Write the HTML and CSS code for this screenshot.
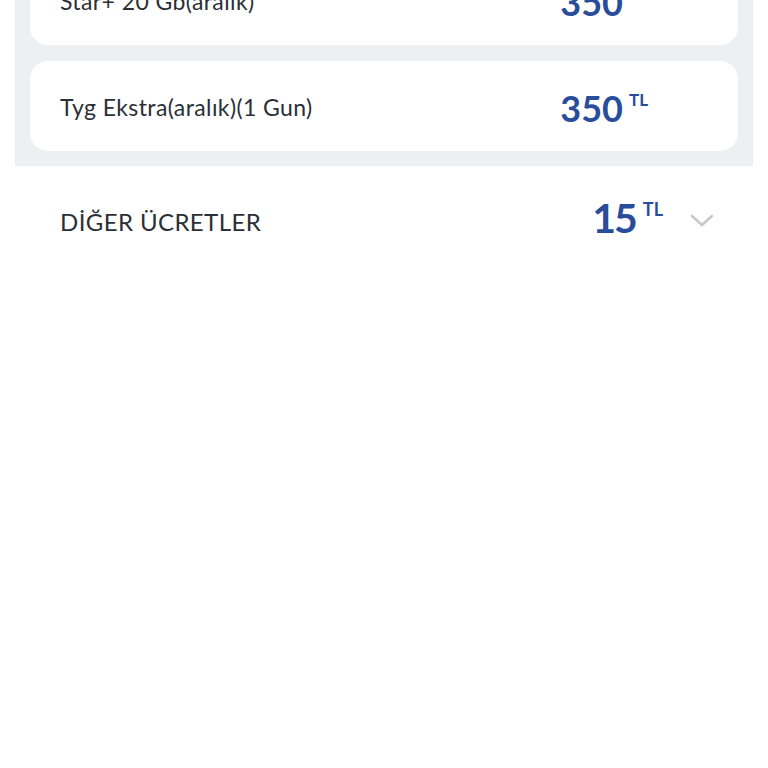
FILE: index.html
```html
<!DOCTYPE html>
<html lang="tr">
<head>
  <meta charset="UTF-8">
  <title>Fatura Detayı</title>
  <link rel="stylesheet" href="styles.css">
</head>
<body>

  <div class="extras-box">
    <div class="item-card">
      <span class="item-name">Star+ 20 Gb(aralık)</span>
      <span class="price">350<sup>TL</sup></span>
    </div>
    <div class="item-card">
      <span class="item-name">Tyg Ekstra(aralık)(1 Gun)</span>
      <span class="price">350<sup>TL</sup></span>
    </div>
  </div>

  <div class="fee-row">
    <span class="fee-title">DİĞER ÜCRETLER</span>
    <span class="price price-big">15<sup>TL</sup></span>
    <svg class="chevron" width="24" height="14" viewBox="0 0 24 14">
      <path d="M2 2 L12 11 L22 2" fill="none" stroke="#c9c9c9" stroke-width="2.6" stroke-linecap="round" stroke-linejoin="round"/>
    </svg>
  </div>

</body>
</html>
```

FILE: styles.css
```css
body {
  margin: 0;
  font-family: 'Lato', 'Noto Sans', sans-serif;
  background: #fff;
  color: #2b2f36;
}

.extras-box {
  margin: -60px 15px 0;
  padding: 15px;
  background: #edf0f3;
  display: flex;
  flex-direction: column;
  gap: 16px;
}

.item-card {
  background: #fff;
  border-radius: 18px;
  height: 90px;
  display: flex;
  align-items: center;
  padding: 0 90px 0 30px;
}

.item-name {
  flex: 1;
  font-size: 23px;
  letter-spacing: 0.4px;
  margin-top: 2px;
}

.price {
  color: #2a4d9b;
  font-weight: 700;
  font-size: 36px;
  line-height: 1;
  display: flex;
  align-items: flex-start;
  margin-top: 4px;
}

.price sup {
  font-size: 17px;
  margin-left: 6px;
  margin-top: 1px;
  vertical-align: baseline;
  letter-spacing: 0;
}

.fee-row {
  display: flex;
  align-items: center;
  height: 110px;
  padding: 0 54px 0 60px;
}

.fee-title {
  flex: 1;
  font-size: 24px;
  letter-spacing: 0.4px;
}

.price-big {
  font-size: 41px;
  letter-spacing: -2px;
  margin-top: -8px;
}

.price-big sup {
  font-size: 18px;
  margin-left: 7px;
  margin-top: 3px;
}

.chevron {
  margin-left: 27px;
}
```
